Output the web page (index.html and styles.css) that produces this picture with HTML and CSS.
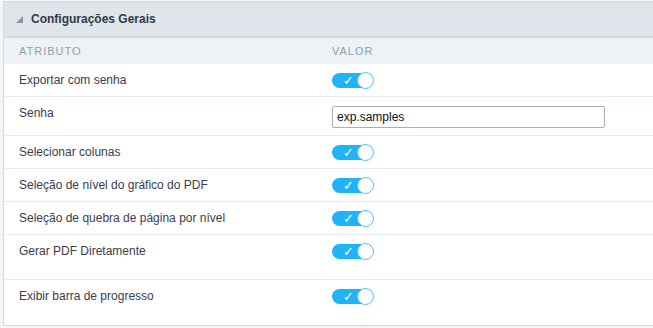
FILE: index.html
```html
<!DOCTYPE html>
<html lang="pt-BR">
<head>
    <meta charset="UTF-8">
    <title>Configurações Gerais</title>
    <link rel="stylesheet" href="styles.css">
</head>
<body>
<div class="panel">
    <div class="panel-title">
        <span class="caret"></span>
        Configurações Gerais
    </div>
    <div class="table-head">
        <div class="col-attr">Atributo</div>
        <div class="col-val">Valor</div>
    </div>

    <div class="row">
        <div class="col-attr">Exportar com senha</div>
        <div class="col-val"><span class="toggle"><span class="check">&#10003;</span></span></div>
    </div>
    <div class="row row-input">
        <div class="col-attr">Senha</div>
        <div class="col-val"><input type="text" class="text-input" value="exp.samples"></div>
    </div>
    <div class="row">
        <div class="col-attr">Selecionar colunas</div>
        <div class="col-val"><span class="toggle"><span class="check">&#10003;</span></span></div>
    </div>
    <div class="row">
        <div class="col-attr">Seleção de nível do gráfico do PDF</div>
        <div class="col-val"><span class="toggle"><span class="check">&#10003;</span></span></div>
    </div>
    <div class="row">
        <div class="col-attr">Seleção de quebra de página por nível</div>
        <div class="col-val"><span class="toggle"><span class="check">&#10003;</span></span></div>
    </div>
    <div class="row row-tall">
        <div class="col-attr">Gerar PDF Diretamente</div>
        <div class="col-val"><span class="toggle"><span class="check">&#10003;</span></span></div>
    </div>
    <div class="row row-tall row-last">
        <div class="col-attr">Exibir barra de progresso</div>
        <div class="col-val"><span class="toggle"><span class="check">&#10003;</span></span></div>
    </div>
</div>
</body>
</html>
```

FILE: styles.css
```css
body {
    margin: 0;
    background-color: #f3f6f8;
    font-family: Arial, "Liberation Sans", sans-serif;
    font-size: 12px;
    color: #3b3b4b;
}

.panel {
    margin: 1px 0 0 3px;
    background-color: #ffffff;
    border-top: 1px solid #d5dbe0;
    border-left: 1px solid #d5dbe0;
    border-bottom: 1px solid #d0dbe2;
}

.panel-title {
    height: 34px;
    display: flex;
    align-items: center;
    padding-left: 12px;
    background-color: #dfe5eb;
    border-bottom: 2px solid #d1dce1;
    font-weight: bold;
    font-size: 12px;
    color: #2f3a48;
}

.caret {
    width: 0;
    height: 0;
    border-left: 7px solid transparent;
    border-bottom: 7px solid #8c959c;
    margin-right: 8px;
    margin-top: 1px;
}

.table-head {
    display: flex;
    height: 26px;
    align-items: center;
    background-color: #eef2f5;
    font-size: 11px;
    letter-spacing: 1px;
    text-transform: uppercase;
    color: #8f9fa9;
}

.col-attr {
    width: 313px;
    padding-left: 15px;
    flex-shrink: 0;
}

.col-val {
    flex: 1;
}

.row {
    display: flex;
    height: 33px;
    padding-top: 8px;
    box-sizing: border-box;
    line-height: 16px;
    border-bottom: 1px solid #e9edf0;
}

.row-input {
    height: 39px;
}

.row-tall {
    height: 45px;
}

.row-last {
    border-bottom: none;
}

.toggle {
    position: relative;
    display: inline-block;
    width: 41px;
    height: 15px;
    margin-top: 1px;
    border-radius: 8px;
    background-color: #21b3f7;
}

.check {
    position: absolute;
    left: 11px;
    top: 0;
    font-size: 13px;
    line-height: 16px;
    color: #ffffff;
}

.toggle::after {
    content: "";
    position: absolute;
    right: -1px;
    top: -1px;
    width: 15px;
    height: 15px;
    border-radius: 50%;
    background-color: #ffffff;
    border: 1px solid #4fc0f5;
}

.text-input {
    width: 273px;
    height: 22px;
    margin-top: 1px;
    box-sizing: border-box;
    padding: 0 4px;
    border: 1px solid #a7afb6;
    border-radius: 2px;
    font-family: Arial, "Liberation Sans", sans-serif;
    font-size: 12px;
    color: #111;
}
```
